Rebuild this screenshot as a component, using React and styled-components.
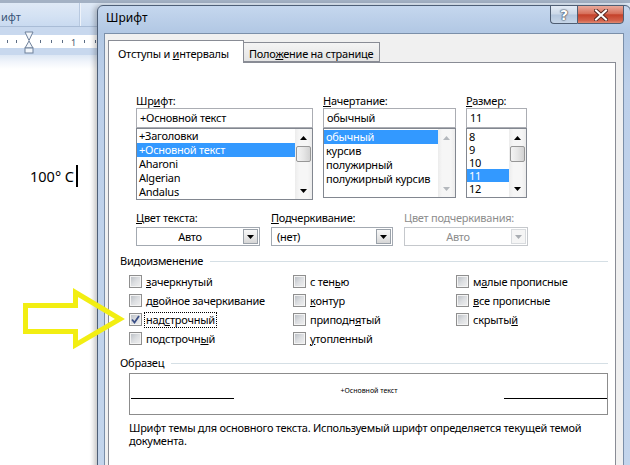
import React from "react";
import styled, { createGlobalStyle } from "styled-components";

const UI = `"Noto Sans", "Liberation Sans", sans-serif`;

const GlobalStyle = createGlobalStyle`
  html, body {
    margin: 0;
    padding: 0;
  }
  body {
    width: 630px;
    height: 465px;
    overflow: hidden;
    font-family: ${UI};
    background: #fff;
  }
`;

//data
const fontItems = ["+Заголовки", "+Основной текст", "Aharoni", "Algerian", "Andalus"];
const styleItems = ["обычный", "курсив", "полужирный", "полужирный курсив"];
const sizeItems = ["8", "9", "10", "11", "12"];

const effects = [
  { text: "зачеркнутый", k: 0 },
  { text: "двойное зачеркивание", k: 1 },
  { text: "надстрочный", k: 3, checked: true, focus: true },
  { text: "подстрочный", k: 9 },
  { text: "с тенью", k: 5 },
  { text: "контур", k: 0 },
  { text: "приподнятый", k: 7 },
  { text: "утопленный", k: 0 },
  { text: "малые прописные", k: 1 },
  { text: "все прописные", k: 0 },
  { text: "скрытый", k: 6 },
];

const Hot = styled.span`
  text-decoration: underline;
  text-underline-offset: 1px;
`;

const mn = (text, k) =>
  k < 0 ? (
    text
  ) : (
    <>
      {text.slice(0, k)}
      <Hot>{text[k]}</Hot>
      {text.slice(k + 1)}
    </>
  );

const Tri = ({ up, color }) => (
  <svg width="7" height="4" viewBox="0 0 7 4">
    <path d={up ? "M0 4 H7 L3.5 0 Z" : "M0 0 H7 L3.5 4 Z"} fill={color} />
  </svg>
);

const ScrollBar = ({ disabled, thumb }) => {
  const c = disabled ? "#b4b8bd" : "#000";
  return (
    <Track>
      <ArrowBtn>
        <Tri up color={c} />
      </ArrowBtn>
      {thumb && <Thumb />}
      <TrackFill />
      <ArrowBtn>
        <Tri color={c} />
      </ArrowBtn>
    </Track>
  );
};

const List = ({ items, selected, height, rowH, padTop, disabled, thumb }) => (
  <ListBox $h={height}>
    <Items $pad={padTop}>
      {items.map((it, i) => (
        <Item key={it} $h={rowH} $sel={i === selected}>
          {it}
        </Item>
      ))}
    </Items>
    <ScrollBar disabled={disabled} thumb={thumb} />
  </ListBox>
);

const ComboBox = ({ value, align, disabled }) => (
  <Combo $disabled={disabled}>
    <ComboText $align={align} $disabled={disabled}>
      {value}
    </ComboText>
    <DropBtn $disabled={disabled}>
      <Tri color={disabled ? "#a9adb2" : "#000"} />
    </DropBtn>
  </Combo>
);

const RulerDrawing = () => (
  <svg width="97" height="28" viewBox="0 0 97 28">
    <rect x="0" y="8" width="97" height="13" fill="#fff" />
    {[7, 16, 40, 51, 62, 84, 95].map((x) => (
      <rect key={x} x={x} y="13" width="1" height="3" fill="#5d6d84" />
    ))}
    <text x="71" y="18.5" fontSize="9" fill="#44546c" fontFamily="Noto Sans, sans-serif">
      1
    </text>
    <path d="M25 5 H33 L29 13.5 Z" fill="#f2f6fb" stroke="#6f819b" strokeWidth="1" />
    <path d="M29 14 L33 21 H25 Z" fill="#f2f6fb" stroke="#6f819b" strokeWidth="1" />
    <rect x="25" y="21" width="8" height="5" fill="#f2f6fb" stroke="#6f819b" strokeWidth="1" />
  </svg>
);

const CloseGlyph = () => (
  <svg width="14" height="12" viewBox="0 0 14 12">
    <path d="M2 1.5 L12 10.5 M12 1.5 L2 10.5" stroke="#5a2a24" strokeWidth="4" strokeLinecap="square" />
    <path d="M2 1.5 L12 10.5 M12 1.5 L2 10.5" stroke="#fff" strokeWidth="2" strokeLinecap="square" />
  </svg>
);

const CheckMark = () => (
  <svg width="11" height="11" viewBox="0 0 11 11">
    <path d="M2 5.5 L4.5 8.5 L9 2" fill="none" stroke="#3b4f86" strokeWidth="1.8" />
  </svg>
);

const App = () => {
  return (
    <>
      <GlobalStyle />
      <Screen>
        <WordWindow>
          <Ribbon>
            <GroupCaption>ифт</GroupCaption>
            <RibbonDivider />
          </Ribbon>
          <RulerBar>
            <RulerDrawing />
          </RulerBar>
          <DocArea>
            <DocLine>
              100° C<Caret />
            </DocLine>
          </DocArea>
        </WordWindow>

        <Dialog>
          <TitleBar>
            <Title>Шрифт</Title>
            <Controls>
              <HelpBtn>?</HelpBtn>
              <CloseBtn>
                <CloseGlyph />
              </CloseBtn>
            </Controls>
          </TitleBar>
          <Client>
            <Tabs>
              <Tab $active>{mn("Отступы и интервалы", 10)}</Tab>
              <Tab>{mn("Положение на странице", 4)}</Tab>
            </Tabs>
            <Panel>
              <FontRow>
                <FieldCol $w={177}>
                  <FieldLabel>{mn("Шрифт:", 2)}</FieldLabel>
                  <TextBox>+Основной текст</TextBox>
                  <List items={fontItems} selected={1} height={72} rowH={14} padTop={0} thumb />
                </FieldCol>
                <FieldCol $w={133}>
                  <FieldLabel>{mn("Начертание:", 0)}</FieldLabel>
                  <TextBox>обычный</TextBox>
                  <List items={styleItems} selected={0} height={70} rowH={14} padTop={1} disabled />
                </FieldCol>
                <FieldCol $w={61}>
                  <FieldLabel>{mn("Размер:", 0)}</FieldLabel>
                  <TextBox>11</TextBox>
                  <List items={sizeItems} selected={3} height={70} rowH={13} padTop={1} thumb />
                </FieldCol>
              </FontRow>

              <ColorRow>
                <div>
                  <ComboLabel>{mn("Цвет текста:", 0)}</ComboLabel>
                  <ComboBox value="Авто" align="center" />
                </div>
                <div>
                  <ComboLabel>{mn("Подчеркивание:", 0)}</ComboLabel>
                  <ComboBox value="(нет)" align="left" />
                </div>
                <div>
                  <ComboLabel $disabled>Цвет подчеркивания:</ComboLabel>
                  <ComboBox value="Авто" align="center" disabled />
                </div>
              </ColorRow>

              <GroupHeader $top={8}>
                Видоизменение
                <GroupRule />
              </GroupHeader>
              <CheckGrid>
                {effects.map((e) => (
                  <CheckItem key={e.text}>
                    <Box>{e.checked && <CheckMark />}</Box>
                    <CheckText $focus={e.focus}>{mn(e.text, e.k)}</CheckText>
                  </CheckItem>
                ))}
              </CheckGrid>

              <GroupHeader $top={8}>
                Образец
                <GroupRule />
              </GroupHeader>
              <Sample>
                <BaseLine />
                <SampleText>+Основной текст</SampleText>
                <BaseLine />
              </Sample>
              <Description>
                Шрифт темы для основного текста. Используемый шрифт определяется текущей темой
                документа.
              </Description>
            </Panel>
          </Client>
        </Dialog>

        <Callout viewBox="18 285 112 68">
          <polygon
            points="25.5,305.5 75.5,305.5 75.5,292.5 120,319 75.5,345 75.5,331.5 25.5,331.5"
            fill="none"
            stroke="#f2ee12"
            strokeWidth="5"
            strokeLinejoin="miter"
          />
        </Callout>
      </Screen>
    </>
  );
};

//word window behind the dialog
const Screen = styled.div`
  position: relative;
  width: 630px;
  height: 465px;
  overflow: hidden;
  background: #fff;
`;

const WordWindow = styled.div`
  height: 100%;
  display: flex;
  flex-direction: column;
`;

const Ribbon = styled.div`
  height: 27px;
  flex: none;
  box-sizing: border-box;
  border-top: 3px solid #a3b1c4;
  border-bottom: 1px solid #a9bcd6;
  background: linear-gradient(180deg, #dfe9f6 0%, #d3e1f3 60%, #c9daf0 100%);
  display: flex;
`;

const GroupCaption = styled.div`
  width: 78px;
  padding: 7px 0 0 1px;
  font-size: 11px;
  line-height: 14px;
  color: #3b5478;
`;

const RibbonDivider = styled.div`
  width: 1px;
  background: #b8c9e0;
  box-shadow: 1px 0 0 #eef3fa;
`;

const RulerBar = styled.div`
  height: 28px;
  background: #c8d8ee;
  flex: none;
  svg {
    display: block;
  }
`;

const DocArea = styled.div`
  flex: 1;
  padding: 110px 0 0 30px;
  background: linear-gradient(180deg, #dde7f4 0px, #f1f5fb 7px, #fff 14px);
`;

const DocLine = styled.div`
  display: flex;
  align-items: center;
  font-family: ${UI};
  font-size: 14.5px;
  line-height: 22px;
  color: #000;
`;

const Caret = styled.span`
  width: 2px;
  height: 22px;
  margin-left: 2px;
  background: #000;
`;

//dialog window
const Dialog = styled.div`
  position: absolute;
  left: 97px;
  top: 5px;
  width: 534px;
  height: 470px;
  box-sizing: border-box;
  border: 1px solid #4e5f77;
  border-radius: 6px 6px 0 0;
  background: linear-gradient(180deg, #c5d7ee 0px, #b2c8e4 26px, #bdd0ea 80px, #c3d5ec 100%);
  box-shadow: -3px 0 5px rgba(0, 0, 0, 0.22);
  display: flex;
  flex-direction: column;
  font-family: ${UI};
  font-size: 11px;
  letter-spacing: -0.25px;
  color: #000;
`;

const TitleBar = styled.div`
  height: 27px;
  flex: none;
  display: flex;
  justify-content: space-between;
  align-items: flex-start;
`;

const Title = styled.div`
  padding: 5px 0 0 8px;
  font-size: 12px;
  letter-spacing: 0;
  line-height: 14px;
`;

const Controls = styled.div`
  display: flex;
  margin: -1px 6px 0 0;
`;

const CtrlBtn = styled.div`
  height: 19px;
  box-sizing: border-box;
  border: 1px solid #4f5e73;
  display: flex;
  align-items: center;
  justify-content: center;
`;

const HelpBtn = styled(CtrlBtn)`
  width: 27px;
  border-right: none;
  border-radius: 0 0 0 4px;
  background: linear-gradient(180deg, #e3ebf5 0%, #cbd8e8 48%, #b3c6dd 52%, #c7d6e8 100%);
  font-family: "DejaVu Sans", sans-serif;
  font-size: 14px;
  font-weight: bold;
  letter-spacing: 0;
  color: #fff;
  text-shadow: 0 0 1px #3a4656, 0 0 1px #3a4656, 0 0 2px #3a4656;
`;

const CloseBtn = styled(CtrlBtn)`
  width: 47px;
  border-radius: 0 0 4px 0;
  background: linear-gradient(180deg, #e9a99b 0%, #d7705b 45%, #c4412a 52%, #d2604a 85%, #e08a72 100%);
`;

const Client = styled.div`
  flex: 1;
  min-height: 0;
  margin: 0 6px;
  border: 1px solid #7b8fa9;
  border-bottom: none;
  background: #f0f0f0;
  padding: 6px 7px 0 3px;
  display: flex;
  flex-direction: column;
`;

const Tabs = styled.div`
  display: flex;
  align-items: flex-end;
  margin-bottom: -1px;
  position: relative;
  z-index: 1;
`;

const Tab = styled.div`
  position: relative;
  z-index: ${(p) => (p.$active ? 2 : 1)};
  box-sizing: border-box;
  width: ${(p) => (p.$active ? 136 : 137)}px;
  height: ${(p) => (p.$active ? 23 : 20)}px;
  margin: ${(p) => (p.$active ? "0" : "0 0 1px -1px")};
  padding: ${(p) => (p.$active ? "5px 0 0 9px" : "3px 0 0 5px")};
  border: 1px solid #898c95;
  border-bottom: ${(p) => (p.$active ? "none" : "1px solid #898c95")};
  background: ${(p) => (p.$active ? "#fff" : "linear-gradient(180deg, #f4f4f4, #e4e4e4)")};
  line-height: 15px;
  white-space: nowrap;
`;

const Panel = styled.div`
  flex: 1;
  background: #fff;
  border: 1px solid #898c95;
  border-bottom: none;
  padding: 30px 7px 0 11px;
`;

const FontRow = styled.div`
  display: flex;
  gap: 10px;
  margin-left: 16px;
`;

const FieldCol = styled.div`
  width: ${(p) => p.$w}px;
  flex: none;
  display: flex;
  flex-direction: column;
`;

const FieldLabel = styled.div`
  height: 15px;
  line-height: 15px;
  white-space: nowrap;
`;

const TextBox = styled.div`
  height: 20px;
  box-sizing: border-box;
  border: 1px solid #abadb3;
  padding: 0 3px;
  line-height: 18px;
  background: #fff;
  white-space: nowrap;
`;

const ListBox = styled.div`
  height: ${(p) => p.$h}px;
  box-sizing: border-box;
  border: 1px solid #828790;
  display: flex;
  background: #fff;
`;

const Items = styled.div`
  flex: 1;
  min-width: 0;
  padding-top: ${(p) => p.$pad}px;
`;

const Item = styled.div`
  height: ${(p) => p.$h}px;
  line-height: ${(p) => p.$h}px;
  padding-left: 2px;
  white-space: nowrap;
  overflow: hidden;
  background: ${(p) => (p.$sel ? "#3399ff" : "transparent")};
  color: ${(p) => (p.$sel ? "#fff" : "#000")};
`;

const Track = styled.div`
  width: 17px;
  flex: none;
  display: flex;
  flex-direction: column;
  background: linear-gradient(90deg, #ececec 0%, #f6f6f6 25%, #f6f6f6 75%, #ececec 100%);
`;

const ArrowBtn = styled.div`
  height: 17px;
  flex: none;
  display: flex;
  align-items: center;
  justify-content: center;
`;

const Thumb = styled.div`
  height: 16px;
  flex: none;
  margin: 0 1px;
  box-sizing: border-box;
  border: 1px solid #979797;
  border-radius: 2px;
  background: linear-gradient(90deg, #f4f4f4 0%, #e6e6e6 50%, #d2d2d2 100%);
`;

const TrackFill = styled.div`
  flex: 1;
`;

const ColorRow = styled.div`
  display: grid;
  grid-template-columns: 124px 122px 124px;
  column-gap: 11px;
  margin: 10px 0 0 16px;
`;

const ComboLabel = styled.div`
  height: 17px;
  line-height: 16px;
  white-space: nowrap;
  color: ${(p) => (p.$disabled ? "#8d8d8d" : "#000")};
`;

const Combo = styled.div`
  height: 19px;
  box-sizing: border-box;
  border: 1px solid ${(p) => (p.$disabled ? "#c5c8cc" : "#a3a9b1")};
  background: #fff;
  display: flex;
  align-items: center;
  padding-right: 1px;
`;

const ComboText = styled.div`
  flex: 1;
  text-align: ${(p) => p.$align};
  padding-left: ${(p) => (p.$align === "left" ? 5 : 0)}px;
  line-height: 17px;
  color: ${(p) => (p.$disabled ? "#8d8d8d" : "#000")};
`;

const DropBtn = styled.div`
  width: 15px;
  height: 15px;
  box-sizing: border-box;
  border: 1px solid ${(p) => (p.$disabled ? "#d8dbde" : "#9aa1a9")};
  background: ${(p) =>
    p.$disabled ? "#f5f5f5" : "linear-gradient(180deg, #f7f7f7 0%, #e9e9e9 50%, #d6d6d6 100%)"};
  display: flex;
  align-items: center;
  justify-content: center;
`;

const GroupHeader = styled.div`
  display: flex;
  align-items: center;
  margin-top: ${(p) => p.$top}px;
  height: 14px;
  line-height: 14px;
  white-space: nowrap;
`;

const GroupRule = styled.div`
  flex: 1;
  height: 1px;
  margin-left: 7px;
  background: #d5dfe5;
`;

const CheckGrid = styled.div`
  display: grid;
  grid-template-columns: 164px 163px 1fr;
  grid-template-rows: repeat(4, 19px);
  grid-auto-flow: column;
  margin: 4px 0 0 9px;
`;

const CheckItem = styled.div`
  display: flex;
  align-items: center;
`;

const Box = styled.div`
  width: 13px;
  height: 13px;
  flex: none;
  box-sizing: border-box;
  border: 1px solid #8f8f8f;
  box-shadow: inset 0 0 0 1px #f4f4f4;
  background: linear-gradient(135deg, #b6bbc1 0%, #dcdee1 50%, #f1f1f1 100%);
  display: flex;
  align-items: center;
  justify-content: center;
`;

const CheckText = styled.span`
  margin-left: 2px;
  padding: 0 1px;
  line-height: 14px;
  border: 1px dotted ${(p) => (p.$focus ? "#000" : "transparent")};
  white-space: nowrap;
`;

const Sample = styled.div`
  height: 42px;
  margin: 3px 0 0 9px;
  box-sizing: border-box;
  border: 1px solid #8c8c8c;
  padding: 0 0 15px 1px;
  display: flex;
  align-items: flex-end;
  justify-content: space-between;
`;

const BaseLine = styled.div`
  width: 103px;
  height: 1px;
  background: #000;
`;

const SampleText = styled.div`
  font-size: 7px;
  letter-spacing: 0;
  line-height: 8px;
  margin-bottom: 4px;
  white-space: nowrap;
`;

const Description = styled.div`
  margin: 6px 0 0 9px;
  width: 460px;
  line-height: 13px;
`;

const Callout = styled.svg`
  position: absolute;
  left: 18px;
  top: 285px;
  width: 112px;
  height: 68px;
  overflow: visible;
`;

export default App;
